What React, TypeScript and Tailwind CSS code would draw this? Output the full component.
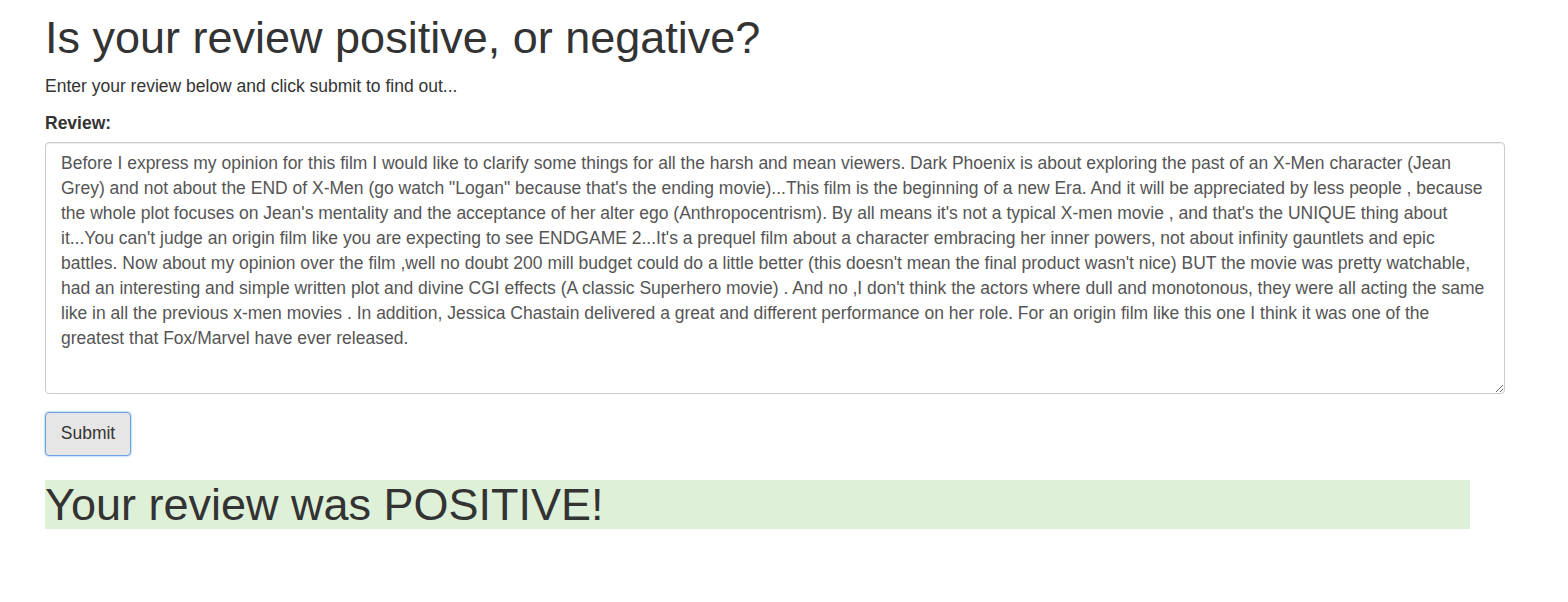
import React, { useState } from 'react';

const REVIEW =
  "Before I express my opinion for this film I would like to clarify some things for all the harsh and mean viewers. Dark Phoenix is about exploring the past of an X-Men character (Jean Grey) and not about the END of X-Men (go watch \"Logan\" because that's the ending movie)...This film is the beginning of a new Era. And it will be appreciated by less people , because the whole plot focuses on Jean's mentality and the acceptance of her alter ego (Anthropocentrism). By all means it's not a typical X-men movie , and that's the UNIQUE thing about it...You can't judge an origin film like you are expecting to see ENDGAME 2...It's a prequel film about a character embracing her inner powers, not about infinity gauntlets and epic battles. Now about my opinion over the film ,well no doubt 200 mill budget could do a little better (this doesn't mean the final product wasn't nice) BUT the movie was pretty watchable, had an interesting and simple written plot and divine CGI effects (A classic Superhero movie) . And no ,I don't think the actors where dull and monotonous, they were all acting the same like in all the previous x-men movies . In addition, Jessica Chastain delivered a great and different performance on her role. For an origin film like this one I think it was one of the greatest that Fox/Marvel have ever released.";

export default function App() {
  const [review, setReview] = useState(REVIEW);

  return (
    <div className="min-h-[602px] bg-white pl-[45px] pr-[63px] text-[#333] font-['Liberation_Sans',Arial,sans-serif]">
      <h1 className="pt-[11px] text-[45px] leading-[54px]">Is your review positive, or negative?</h1>
      <p className="mt-[9px] text-[17.5px] leading-[25px]">Enter your review below and click submit to find out...</p>
      <form onSubmit={(e) => e.preventDefault()}>
        <label htmlFor="review" className="mt-[12px] block text-[17.5px] font-bold leading-[25px]">
          Review:
        </label>
        <textarea
          id="review"
          value={review}
          onChange={(e) => setReview(e.target.value)}
          className="mt-[6px] block h-[252px] w-full resize-y rounded-[4px] border border-[#ccc] px-[15px] pt-[8px] pb-[6px] text-[17.5px] leading-[25px] text-[#555] shadow-[inset_0_1px_1px_rgba(0,0,0,0.075)] outline-none"
        />
        <button
          type="submit"
          className="mt-[18px] block h-[44px] w-[86px] rounded-[4px] border border-[#6d9ee6] bg-[#e6e6e6] pb-[2px] text-[17.5px] text-[#333] shadow-[0_0_1px_1px_rgba(102,175,233,0.35)]"
        >
          Submit
        </button>
      </form>
      <div className="mt-[24px] w-[1425px] bg-[#dff0d8] text-[45px] leading-[49px]">Your review was POSITIVE!</div>
    </div>
  );
}
